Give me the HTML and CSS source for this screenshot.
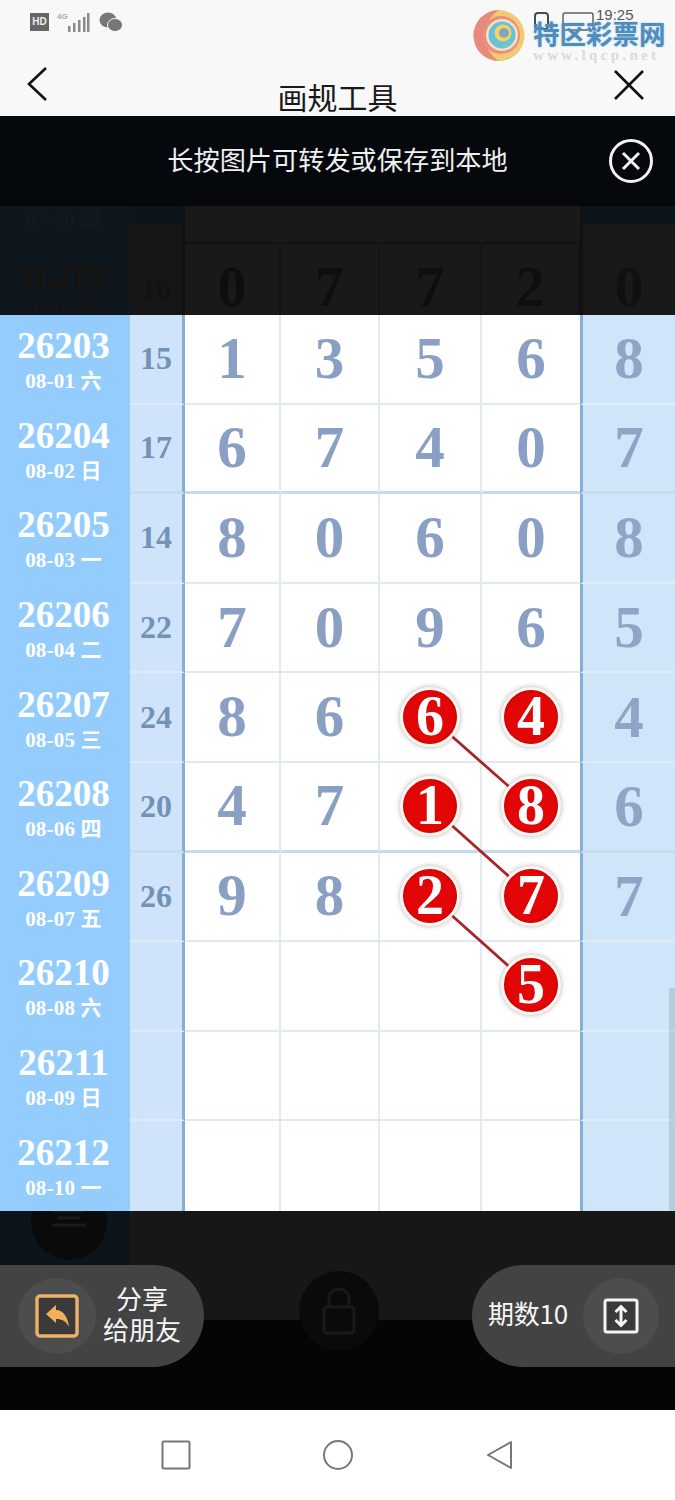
FILE: index.html
```html
<!DOCTYPE html>
<html lang="zh-CN">
<head>
    <meta charset="UTF-8">
    <meta name="viewport" content="width=device-width, initial-scale=1.0">
    <title>画规工具</title>
    <link rel="stylesheet" href="styles.css">
</head>
<body>
<div class="screen">
    <header class="top">
        <div class="status">
            <span class="hd">HD</span>
            <svg class="signal" width="34" height="22" viewBox="0 0 34 22">
                <text x="0" y="8" class="net">4G</text>
                <rect x="11" y="15" width="2.5" height="6" fill="#8a8a8a"/>
                <rect x="16" y="12" width="2.5" height="9" fill="#8a8a8a"/>
                <rect x="21" y="9" width="2.5" height="12" fill="#8a8a8a"/>
                <rect x="26" y="6" width="2.5" height="15" fill="#8a8a8a"/>
                <rect x="30" y="2" width="2.5" height="19" fill="#8a8a8a"/>
            </svg>
            <svg class="wechat" width="24" height="22" viewBox="0 0 24 22">
                <ellipse cx="9" cy="9" rx="8.5" ry="7.5" fill="#777"/>
                <ellipse cx="16" cy="14" rx="7.5" ry="6.5" fill="#777" stroke="#f8f8f8"/>
            </svg>
        </div>
        <div class="nav">
            <svg class="back" width="24" height="36" viewBox="0 0 24 36"><path d="M20 2 L3 18 L20 34" fill="none" stroke="#111" stroke-width="2.6"/></svg>
            <h1>画规工具</h1>
            <svg class="shut" width="32" height="32" viewBox="0 0 32 32"><path d="M2 2 L30 30 M30 2 L2 30" fill="none" stroke="#111" stroke-width="2.6"/></svg>
        </div>
        <svg class="phone-marks" width="60" height="20" viewBox="0 0 60 20">
            <rect x="1" y="1" width="13" height="16" rx="3" fill="none" stroke="#3d4d5c" stroke-width="2"/>
            <rect x="29" y="1" width="30" height="17" rx="2" fill="none" stroke="#55606b" stroke-width="1.5"/>
        </svg>
        <div class="mark">
            <svg class="swirl" width="52" height="53" viewBox="0 0 52 53">
                <circle cx="26" cy="26.5" r="25.5" fill="#f4cb72"/>
                <path d="M26 1 A25.5 25.5 0 0 0 26 52 A30 30 0 0 1 26 1 Z" fill="#e58a7c"/>
                <path d="M9 46 A25.5 25.5 0 0 0 48 38 A27 27 0 0 1 9 46 Z" fill="#b5d27c"/>
                <circle cx="28" cy="26" r="19" fill="#e98f7f"/>
                <circle cx="29" cy="26" r="16" fill="#f6e2c6"/>
                <circle cx="29" cy="26" r="13.5" fill="#66c1d9"/>
                <path d="M20 34 A13 13 0 0 0 41 31 A14 14 0 0 1 20 34 Z" fill="#9bd39a"/>
                <circle cx="30" cy="24" r="8.5" fill="#f4d35f"/>
                <circle cx="31" cy="24" r="5" fill="#7fa8bf"/>
            </svg>
            <div class="mark-text">
                <span class="mark-name">特区彩票网</span>
                <span class="mark-url">www.lqcp.net</span>
            </div>
        </div>
        <span class="clock">19:25</span>
    </header>

    <main class="stage">
        <div class="banner">
            <span class="banner-text">长按图片可转发或保存到本地</span>
            <svg class="banner-close" width="46" height="46" viewBox="0 0 46 46">
                <circle cx="23" cy="23" r="20.5" fill="none" stroke="#f2f2f2" stroke-width="3"/>
                <path d="M15 15 L31 31 M31 15 L15 31" fill="none" stroke="#f2f2f2" stroke-width="3"/>
            </svg>
        </div>

        <div class="ghost">
            <div class="ghost-date">
                <small class="ghost-prev">07-30 四</small>
                <b>26202</b>
                <small>07-31 五</small>
            </div>
            <div class="ghost-sum">16</div>
            <div class="ghost-num">0</div>
            <div class="ghost-num">7</div>
            <div class="ghost-num">7</div>
            <div class="ghost-num">2</div>
            <div class="ghost-last">0</div>
        </div>

        <div class="table">
            <svg class="links" width="675" height="896" viewBox="0 0 675 896">
                <path d="M430 402 L531 491 M430 491 L531 581 M430 581 L531 671" fill="none" stroke="#a4262b" stroke-width="2.8"/>
            </svg>

            <div class="row">
                <div class="date"><b>26203</b><small>08-01 六</small></div>
                <div class="sum">15</div>
                <div class="num">1</div><div class="num">3</div><div class="num">5</div><div class="num">6</div>
                <div class="last">8</div>
            </div>
            <div class="row thick">
                <div class="date"><b>26204</b><small>08-02 日</small></div>
                <div class="sum">17</div>
                <div class="num">6</div><div class="num">7</div><div class="num">4</div><div class="num">0</div>
                <div class="last">7</div>
            </div>
            <div class="row">
                <div class="date"><b>26205</b><small>08-03 一</small></div>
                <div class="sum">14</div>
                <div class="num">8</div><div class="num">0</div><div class="num">6</div><div class="num">0</div>
                <div class="last">8</div>
            </div>
            <div class="row">
                <div class="date"><b>26206</b><small>08-04 二</small></div>
                <div class="sum">22</div>
                <div class="num">7</div><div class="num">0</div><div class="num">9</div><div class="num">6</div>
                <div class="last">5</div>
            </div>
            <div class="row">
                <div class="date"><b>26207</b><small>08-05 三</small></div>
                <div class="sum">24</div>
                <div class="num">8</div><div class="num">6</div>
                <div class="num"><span class="ball">6</span></div>
                <div class="num"><span class="ball">4</span></div>
                <div class="last">4</div>
            </div>
            <div class="row thick">
                <div class="date"><b>26208</b><small>08-06 四</small></div>
                <div class="sum">20</div>
                <div class="num">4</div><div class="num">7</div>
                <div class="num"><span class="ball">1</span></div>
                <div class="num"><span class="ball">8</span></div>
                <div class="last">6</div>
            </div>
            <div class="row">
                <div class="date"><b>26209</b><small>08-07 五</small></div>
                <div class="sum">26</div>
                <div class="num">9</div><div class="num">8</div>
                <div class="num"><span class="ball">2</span></div>
                <div class="num"><span class="ball">7</span></div>
                <div class="last">7</div>
            </div>
            <div class="row">
                <div class="date"><b>26210</b><small>08-08 六</small></div>
                <div class="sum"></div>
                <div class="num"></div><div class="num"></div><div class="num"></div>
                <div class="num"><span class="ball">5</span></div>
                <div class="last"></div>
            </div>
            <div class="row">
                <div class="date"><b>26211</b><small>08-09 日</small></div>
                <div class="sum"></div>
                <div class="num"></div><div class="num"></div><div class="num"></div><div class="num"></div>
                <div class="last"></div>
            </div>
            <div class="row end">
                <div class="date"><b>26212</b><small>08-10 一</small></div>
                <div class="sum"></div>
                <div class="num"></div><div class="num"></div><div class="num"></div><div class="num"></div>
                <div class="last"></div>
            </div>

            <div class="scrollbar"></div>
        </div>

        <div class="foot">
            <div class="ghost-round">
                <svg width="38" height="20" viewBox="0 0 38 20">
                    <path d="M4 3 H34 M8 10 H30 M2 17 H36" fill="none" stroke="#1b1b1b" stroke-width="3"/>
                </svg>
            </div>
            <div class="ghost-lock">
                <svg width="40" height="52" viewBox="0 0 40 52">
                    <path d="M10 22 V14 A10 10 0 0 1 30 14 V22" fill="none" stroke="#191919" stroke-width="3"/>
                    <rect x="5" y="22" width="30" height="26" rx="3" fill="none" stroke="#191919" stroke-width="3"/>
                </svg>
            </div>
            <div class="pill pill-left">
                <span class="round">
                    <svg width="44" height="44" viewBox="0 0 44 44">
                        <rect x="2" y="2" width="40" height="40" rx="3" fill="#3a3a3a" stroke="#efb067" stroke-width="3.4"/>
                        <path d="M11 20 L21 11 V16 C29 16 33 24 34 33 C31 27 27 25 21 25 V29 Z" fill="#f2ae5a"/>
                    </svg>
                </span>
                <span class="share-text">分享<br>给朋友</span>
            </div>
            <div class="pill pill-right">
                <span class="count">期数10</span>
                <span class="round">
                    <svg width="36" height="36" viewBox="0 0 36 36">
                        <rect x="2" y="2" width="32" height="32" rx="2" fill="#3a3a3a" stroke="#f4f4f4" stroke-width="3"/>
                        <path d="M18 9 V27 M12.5 14 L18 8.5 L23.5 14 M12.5 22 L18 27.5 L23.5 22" fill="none" stroke="#f4f4f4" stroke-width="3"/>
                    </svg>
                </span>
            </div>
        </div>
    </main>

    <footer class="keys">
        <svg width="30" height="30" viewBox="0 0 30 30"><rect x="1.5" y="1.5" width="27" height="27" rx="1.5" fill="none" stroke="#777" stroke-width="2"/></svg>
        <svg width="32" height="32" viewBox="0 0 32 32"><circle cx="16" cy="16" r="14" fill="none" stroke="#777" stroke-width="2"/></svg>
        <svg width="30" height="30" viewBox="0 0 30 30"><path d="M26 2 V28 L3 15 Z" fill="none" stroke="#777" stroke-width="2" stroke-linejoin="round"/></svg>
    </footer>
</div>
</body>
</html>
```

FILE: styles.css
```css
* {
    box-sizing: border-box;
}

body {
    margin: 0;
    background-color: white;
    font-family: "Noto Sans CJK SC", "Noto Sans", sans-serif;
}

.screen {
    display: flex;
    flex-direction: column;
    width: 675px;
    height: 1500px;
    overflow: hidden;
}

/* top bar */
.top {
    position: relative;
    flex: 0 0 116px;
    display: flex;
    flex-direction: column;
    background-color: #f8f8f8;
}

.status {
    display: flex;
    align-items: center;
    gap: 8px;
    height: 44px;
    padding-left: 30px;
}

.hd {
    width: 19px;
    height: 18px;
    background-color: #666;
    color: #eee;
    font: bold 10px/18px "Liberation Sans", sans-serif;
    text-align: center;
}

.net {
    font: bold 8px "Liberation Sans", sans-serif;
    fill: #aaa;
}

.nav {
    position: relative;
    display: flex;
    justify-content: space-between;
    height: 72px;
    padding: 21px 30px 0 26px;
}

.nav h1 {
    position: absolute;
    left: 0;
    right: 0;
    top: 30px;
    margin: 0;
    color: #1a1a1a;
    font-size: 30px;
    font-weight: 400;
    line-height: 44px;
    text-align: center;
}

.back {
    margin-top: 1px;
}

.shut {
    margin-top: 4px;
}

.phone-marks {
    position: absolute;
    left: 534px;
    top: 12px;
}

.mark {
    position: absolute;
    left: 473px;
    top: 9px;
    display: flex;
    gap: 8px;
}

.swirl {
    filter: blur(0.6px);
}

.mark-text {
    display: flex;
    flex-direction: column;
    padding-top: 12px;
}

.mark-name {
    color: #4f8dbd;
    font-size: 26.5px;
    font-weight: 700;
    line-height: 24px;
    white-space: nowrap;
    text-shadow: 0 0 2px rgba(120, 175, 220, 0.7);
}

.mark-url {
    margin-top: 1px;
    color: #dadada;
    font: bold 15px/18px "Liberation Serif", serif;
    letter-spacing: 3.3px;
    white-space: nowrap;
}

.clock {
    position: absolute;
    left: 596px;
    top: 9px;
    color: #555;
    font: 15px/12px "Liberation Sans", sans-serif;
}

/* dark area */
.stage {
    flex: 1;
    display: flex;
    flex-direction: column;
    background-color: #050505;
}

.banner {
    position: relative;
    flex: 0 0 90px;
    display: flex;
    align-items: center;
    justify-content: center;
    padding-bottom: 4px;
    background-color: #05090e;
    color: #f0f0f0;
    font-size: 26.2px;
}

.banner-close {
    position: absolute;
    right: 21px;
    top: 22px;
}

.ghost {
    flex: 0 0 109px;
    display: grid;
    grid-template-columns: 130px 55px 96px 99px 102px 98px 95px;
    background-color: #191919;
    font-family: "Liberation Serif", "Noto Sans CJK SC", serif;
    font-weight: 700;
    text-align: center;
}

.ghost-date {
    display: flex;
    flex-direction: column;
    align-items: center;
    padding-right: 3px;
    background-color: #0f171e;
    color: #17130f;
}

.ghost-date b {
    font-size: 37px;
    line-height: 40px;
}

.ghost-date small {
    font-size: 21px;
    line-height: 18px;
}

.ghost-date .ghost-prev {
    height: 51px;
    padding-top: 4px;
    color: #121a21;
}

.ghost-sum {
    padding-top: 65px;
    border-right: 3px solid #111;
    background: linear-gradient(#0d151c 19px, #161616 19px);
    color: #0f1116;
    font-size: 30px;
    line-height: 36px;
}

.ghost-num {
    margin-top: 36px;
    padding-top: 18px;
    border-top: 2px solid #121212;
    border-right: 2px solid #141414;
    color: #0e0e0e;
    font-size: 58px;
    line-height: 50px;
}

.ghost-last {
    padding-top: 56px;
    border-left: 3px solid #111;
    background: linear-gradient(#0c151c 18px, #191919 18px);
    color: #101010;
    font-size: 58px;
    line-height: 50px;
}

/* table */
.table {
    position: relative;
    flex: 0 0 896px;
    display: grid;
    grid-auto-rows: 1fr;
    font-family: "Liberation Serif", "Noto Sans CJK SC", serif;
    font-weight: 700;
}

.links {
    position: absolute;
    left: 0;
    top: 0;
    z-index: 1;
}

.row {
    display: grid;
    grid-template-columns: 130px 55px 96px 99px 102px 98px 95px;
    min-height: 0;
}

.row > div {
    display: flex;
    align-items: center;
    justify-content: center;
    border-bottom: 2px solid #e1eaf3;
}

.row.thick > div {
    border-bottom: 3px solid #c7dbec;
}

.row.end > div {
    border-bottom: none;
}

.row > .date,
.row.thick > .date {
    flex-direction: column;
    padding: 2px 3px 0 0;
    border-bottom: none;
    background-color: #94cdfd;
    color: white;
}

.date b {
    font-size: 37px;
    line-height: 40px;
}

.date small {
    margin-top: 2px;
    font-size: 21px;
    line-height: 27px;
    letter-spacing: 0.2px;
}

.sum {
    border-right: 3px solid #85aed0;
    background-color: #cfe4fa;
    color: #7392b6;
    font-size: 32px;
}

.num {
    padding-bottom: 1px;
    border-right: 2px solid #e1eaf3;
    background-color: white;
    color: #8a9fc4;
    font-size: 59px;
}

.num:nth-child(6) {
    border-right: none;
}

.last {
    border-left: 3px solid #85aed0;
    background-color: #cfe5fa;
    color: #8fa5c5;
    font-size: 59px;
}

.ball {
    position: relative;
    z-index: 2;
    width: 60px;
    height: 60px;
    border: 3px solid #fff6f2;
    border-radius: 50%;
    background-color: #e30606;
    box-shadow: 0 0 5px rgba(90, 70, 70, 0.45), inset 0 0 3px rgba(120, 0, 0, 0.6);
    color: white;
    font-size: 56px;
    line-height: 52px;
    text-align: center;
}

.scrollbar {
    position: absolute;
    right: 0;
    bottom: 0;
    width: 6px;
    height: 223px;
    background-color: rgba(120, 130, 140, 0.25);
}

/* bottom of dark area */
.foot {
    position: relative;
    flex: 1;
    display: flex;
    justify-content: space-between;
    align-items: flex-start;
    padding-top: 54px;
    overflow: hidden;
    background:
        linear-gradient(90deg, #0d151c 0, #0d151c 130px, #171717 130px) top / 100% 109px no-repeat,
        #050505;
}

.ghost-round {
    position: absolute;
    left: 31px;
    top: -27px;
    display: flex;
    align-items: center;
    justify-content: center;
    width: 76px;
    height: 76px;
    padding-bottom: 8px;
    border-radius: 50%;
    background-color: #0a0a0a;
}

.ghost-lock {
    position: absolute;
    left: 299px;
    top: 60px;
    display: flex;
    align-items: center;
    justify-content: center;
    width: 80px;
    height: 80px;
    border-radius: 50%;
    background-color: #0a0a0a;
}

.pill {
    position: relative;
    display: flex;
    align-items: center;
    height: 102px;
    background-color: #434343;
    color: #f6f6f6;
    font-size: 26px;
}

.pill-left {
    width: 204px;
    padding-left: 18px;
    border-radius: 0 51px 51px 0;
}

.pill-right {
    width: 203px;
    padding-left: 16px;
    border-radius: 51px 0 0 51px;
}

.round {
    flex: none;
    display: flex;
    align-items: center;
    justify-content: center;
    width: 78px;
    height: 76px;
    border-radius: 50%;
    background-color: #4d4d4d;
}

.share-text {
    flex: 1;
    padding: 0 16px 7px 0;
    line-height: 31px;
    text-align: center;
}

.count {
    flex: 1;
    padding-bottom: 7px;
    letter-spacing: -0.2px;
}

.pill-right .round {
    width: 76px;
    margin-right: 16px;
}

/* android keys */
.keys {
    flex: 0 0 90px;
    display: flex;
    align-items: center;
    justify-content: center;
    gap: 131px;
    background-color: white;
}
```
